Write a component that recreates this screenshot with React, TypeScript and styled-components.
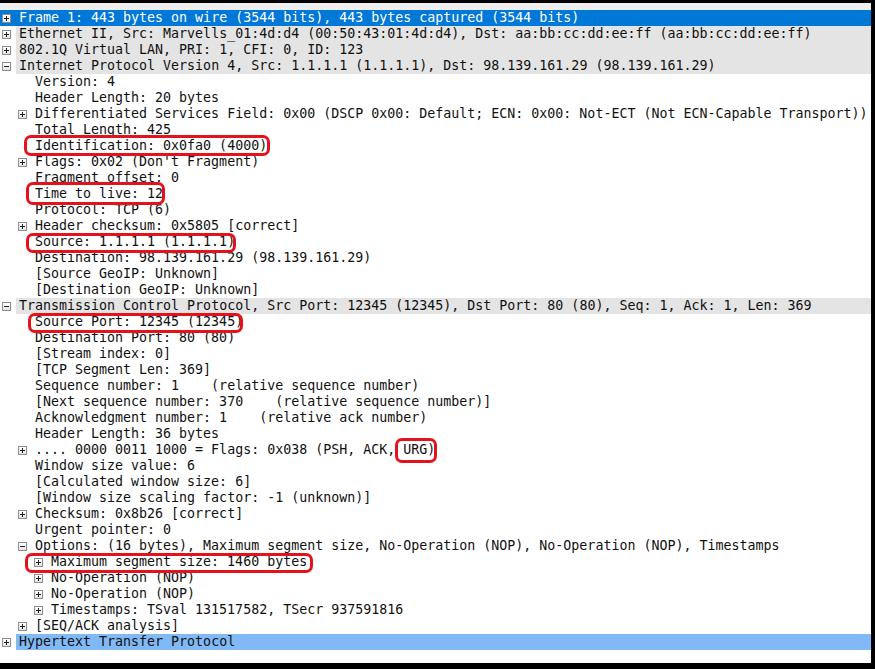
import React from "react";
import styled, { createGlobalStyle, css } from "styled-components";

type Tone = "selected" | "proto" | "hover";
type Box = { l: number; r: number; t: number; b: number };
type Part = string | { text: string; box: Box };

interface TreeRow {
  level: number;
  twisty?: "+" | "-";
  tone?: Tone;
  parts: Part[];
}

const GlobalStyle = createGlobalStyle`
  html, body {
    margin: 0;
    padding: 0;
    background: #000;
  }
`;

const Frame = styled.div`
  width: 875px;
  height: 669px;
  box-sizing: border-box;
  padding: 3px 4px 6px 0;
  background: #000;
`;

const Pane = styled.div`
  height: 100%;
  display: flex;
  flex-direction: column;
  background: #fff;
  font-family: "DejaVu Sans Mono", "Liberation Mono", monospace;
  font-size: 13.3px;
  color: #111;
`;

const HeaderStrip = styled.div`
  height: 7px;
  flex: none;
  background: #efefef;
`;

const Tree = styled.div`
  display: flex;
  flex-direction: column;
`;

const Row = styled.div<{ $level: number; $tone?: Tone }>`
  display: flex;
  align-items: center;
  height: 16px;
  padding-left: ${(p) => p.$level * 16}px;
  ${(p) =>
    p.$tone === "selected" &&
    css`
      background: #0078d7;
    `}
`;

const Twisty = styled.span`
  width: 16px;
  height: 16px;
  flex: none;
  display: flex;
  align-items: center;
  padding-left: 2px;
  box-sizing: border-box;
`;

const toneBg: Record<Tone, string> = {
  selected: "#0078d7",
  proto: "#e4e4e4",
  hover: "#80b9f5",
};

const Label = styled.span<{ $tone?: Tone }>`
  flex: 1;
  height: 16px;
  line-height: 16px;
  padding-left: 3px;
  white-space: pre;
  background: ${(p) => (p.$tone ? toneBg[p.$tone] : "transparent")};
  color: ${(p) => (p.$tone === "selected" ? "#fff" : "#111")};
`;

const Callout = styled.span<{ $box: Box }>`
  position: relative;
  display: inline-block;
  vertical-align: top;
  height: 16px;
  line-height: 16px;
  &::after {
    content: "";
    position: absolute;
    left: ${(p) => -p.$box.l}px;
    right: ${(p) => -p.$box.r}px;
    top: ${(p) => -p.$box.t}px;
    bottom: ${(p) => -p.$box.b}px;
    border: 3px solid #e5121c;
    border-radius: 7px;
    pointer-events: none;
  }
`;

const Expander = ({ sign }: { sign: "+" | "-" }) => (
  <svg width="9" height="9" viewBox="0 0 9 9">
    <defs>
      <linearGradient id="exp" x1="0" y1="0" x2="0" y2="1">
        <stop offset="0" stopColor="#ffffff" />
        <stop offset="1" stopColor="#e6e6e6" />
      </linearGradient>
    </defs>
    <rect x="0.5" y="0.5" width="8" height="8" fill="url(#exp)" stroke="#8f8f8f" />
    <line x1="2" y1="4.5" x2="7" y2="4.5" stroke="#222" />
    {sign === "+" && <line x1="4.5" y1="2" x2="4.5" y2="7" stroke="#222" />}
  </svg>
);

const rows: TreeRow[] = [
  { level: 0, twisty: "+", tone: "selected", parts: ["Frame 1: 443 bytes on wire (3544 bits), 443 bytes captured (3544 bits)"] },
  { level: 0, twisty: "+", tone: "proto", parts: ["Ethernet II, Src: Marvells_01:4d:d4 (00:50:43:01:4d:d4), Dst: aa:bb:cc:dd:ee:ff (aa:bb:cc:dd:ee:ff)"] },
  { level: 0, twisty: "+", tone: "proto", parts: ["802.1Q Virtual LAN, PRI: 1, CFI: 0, ID: 123"] },
  { level: 0, twisty: "-", tone: "proto", parts: ["Internet Protocol Version 4, Src: 1.1.1.1 (1.1.1.1), Dst: 98.139.161.29 (98.139.161.29)"] },
  { level: 1, parts: ["Version: 4"] },
  { level: 1, parts: ["Header Length: 20 bytes"] },
  { level: 1, twisty: "+", parts: ["Differentiated Services Field: 0x00 (DSCP 0x00: Default; ECN: 0x00: Not-ECT (Not ECN-Capable Transport))"] },
  { level: 1, parts: ["Total Length: 425"] },
  { level: 1, parts: [{ text: "Identification: 0x0fa0 (4000)", box: { l: 11, r: 3, t: 3, b: 2 } }] },
  { level: 1, twisty: "+", parts: ["Flags: 0x02 (Don't Fragment)"] },
  { level: 1, parts: ["Fragment offset: 0"] },
  { level: 1, parts: [{ text: "Time to live: 12", box: { l: 9, r: 2, t: 4, b: 3 } }] },
  { level: 1, parts: ["Protocol: TCP (6)"] },
  { level: 1, twisty: "+", parts: ["Header checksum: 0x5805 [correct]"] },
  { level: 1, parts: [{ text: "Source: 1.1.1.1 (1.1.1.1)", box: { l: 9, r: 1, t: 1, b: 3 } }] },
  { level: 1, parts: ["Destination: 98.139.161.29 (98.139.161.29)"] },
  { level: 1, parts: ["[Source GeoIP: Unknown]"] },
  { level: 1, parts: ["[Destination GeoIP: Unknown]"] },
  { level: 0, twisty: "-", tone: "proto", parts: ["Transmission Control Protocol, Src Port: 12345 (12345), Dst Port: 80 (80), Seq: 1, Ack: 1, Len: 369"] },
  { level: 1, parts: [{ text: "Source Port: 12345 (12345)", box: { l: 7, r: 0, t: 1, b: 3 } }] },
  { level: 1, parts: ["Destination Port: 80 (80)"] },
  { level: 1, parts: ["[Stream index: 0]"] },
  { level: 1, parts: ["[TCP Segment Len: 369]"] },
  { level: 1, parts: ["Sequence number: 1    (relative sequence number)"] },
  { level: 1, parts: ["[Next sequence number: 370    (relative sequence number)]"] },
  { level: 1, parts: ["Acknowledgment number: 1    (relative ack number)"] },
  { level: 1, parts: ["Header Length: 36 bytes"] },
  {
    level: 1,
    twisty: "+",
    parts: [".... 0000 0011 1000 = Flags: 0x038 (PSH, ACK, ", { text: "URG)", box: { l: 8, r: 2, t: 4, b: 5 } }],
  },
  { level: 1, parts: ["Window size value: 6"] },
  { level: 1, parts: ["[Calculated window size: 6]"] },
  { level: 1, parts: ["[Window size scaling factor: -1 (unknown)]"] },
  { level: 1, twisty: "+", parts: ["Checksum: 0x8b26 [correct]"] },
  { level: 1, parts: ["Urgent pointer: 0"] },
  { level: 1, twisty: "-", parts: ["Options: (16 bytes), Maximum segment size, No-Operation (NOP), No-Operation (NOP), Timestamps"] },
  { level: 2, twisty: "+", parts: [{ text: "Maximum segment size: 1460 bytes", box: { l: 26, r: 6, t: 1, b: 3 } }] },
  { level: 2, twisty: "+", parts: ["No-Operation (NOP)"] },
  { level: 2, twisty: "+", parts: ["No-Operation (NOP)"] },
  { level: 2, twisty: "+", parts: ["Timestamps: TSval 131517582, TSecr 937591816"] },
  { level: 1, twisty: "+", parts: ["[SEQ/ACK analysis]"] },
  { level: 0, twisty: "+", tone: "hover", parts: ["Hypertext Transfer Protocol"] },
];

export default function App() {
  return (
    <>
      <GlobalStyle />
      <Frame>
        <Pane>
          <HeaderStrip />
          <Tree>
            {rows.map((row, i) => (
              <Row key={i} $level={row.level} $tone={row.tone}>
                <Twisty>{row.twisty && <Expander sign={row.twisty} />}</Twisty>
                <Label $tone={row.tone}>
                  {row.parts.map((part, j) =>
                    typeof part === "string" ? (
                      <React.Fragment key={j}>{part}</React.Fragment>
                    ) : (
                      <Callout key={j} $box={part.box}>
                        {part.text}
                      </Callout>
                    )
                  )}
                </Label>
              </Row>
            ))}
          </Tree>
        </Pane>
      </Frame>
    </>
  );
}
